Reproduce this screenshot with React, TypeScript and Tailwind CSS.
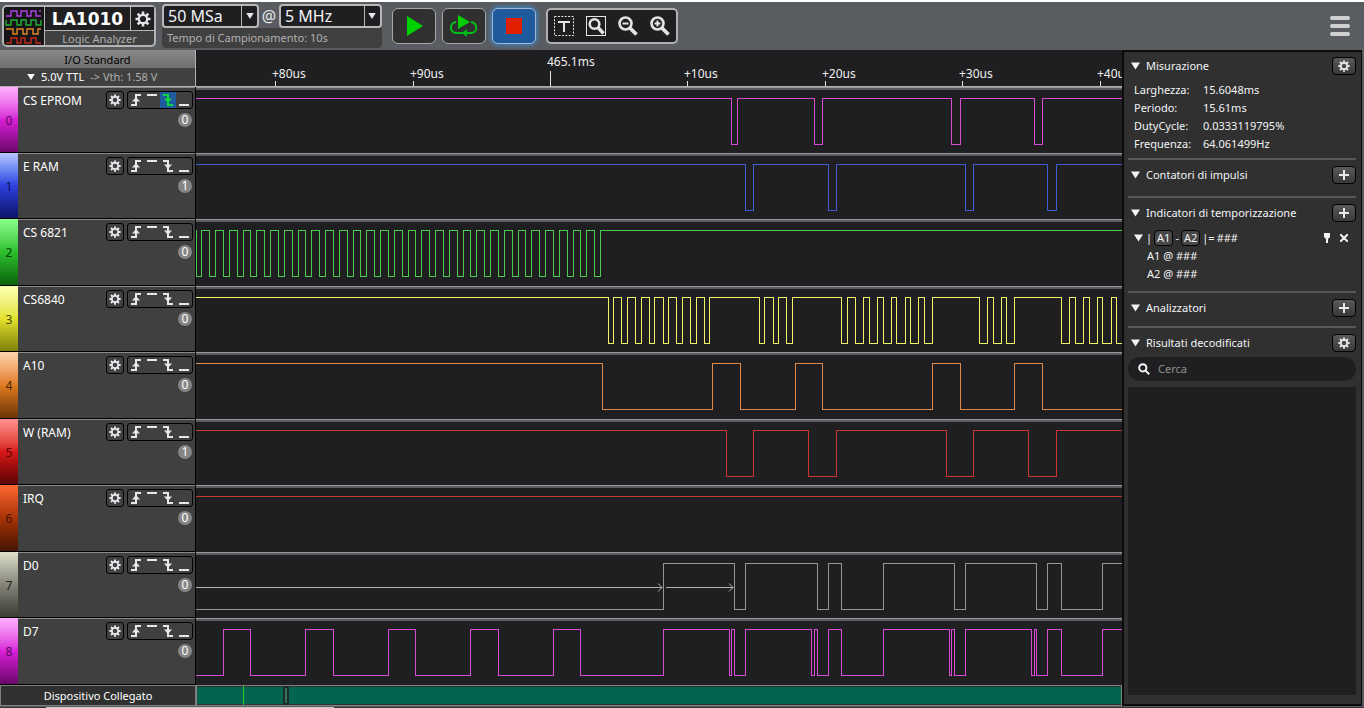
import React, { useState } from 'react';

type Edge = 'rising' | 'high' | 'falling' | 'low';

interface Channel {
  name: string;
  strip: string;
  digit: string;
  color: string;
  count: number;
  startHigh: boolean;
  edges: number[];
  trigger?: Edge;
  arrows?: [number, number][];
}

// A clock burst: low pulses of about 5.5 px, one every 13.75 px
const clockEdges = Array.from({ length: 30 }, (_, k) => {
  const rise = Math.round(5.3 + k * 13.75);
  return [Math.max(0, Math.round(rise - 5.6)), rise];
}).flat();

const CHANNELS: Channel[] = [
  {
    name: 'CS EPROM', count: 0, color: '#d84cd8', digit: 'text-[#5a0a5a]', startHigh: true, trigger: 'falling',
    strip: 'from-[#ffb0ff] via-[#d81fd8] to-[#6c086c]',
    edges: [535, 541, 618, 626, 755, 764, 838, 846],
  },
  {
    name: 'E RAM', count: 1, color: '#3f5cd4', digit: 'text-[#0a1050]', startHigh: true,
    strip: 'from-[#bcc6ff] via-[#2f40e0] to-[#0c1468]',
    edges: [549, 557, 632, 640, 769, 777, 851, 860],
  },
  {
    name: 'CS 6821', count: 0, color: '#4ccc4c', digit: 'text-[#074507]', startHigh: true,
    strip: 'from-[#8cff8c] via-[#2cc02c] to-[#0a640a]',
    edges: clockEdges,
  },
  {
    name: 'CS6840', count: 0, color: '#f2f266', digit: 'text-[#4c4c06]', startHigh: true,
    strip: 'from-[#ffffb0] via-[#e2e22c] to-[#808008]',
    edges: [
      412, 417, 425, 431, 439, 445, 453, 458, 467, 472, 480, 486, 494, 500, 508, 513,
      563, 568, 577, 582, 590, 596, 645, 651, 659, 667, 673, 681, 687, 695, 700, 709,
      714, 722, 728, 736, 783, 791, 797, 805, 810, 818, 865, 873, 879, 887, 893, 901,
      906, 915, 920, 928,
    ],
  },
  {
    name: 'A10', count: 0, color: '#e08c48', digit: 'text-[#4a2404]', startHigh: true,
    strip: 'from-[#ffd4ac] via-[#e07c20] to-[#6c3606]',
    edges: [406, 516, 544, 599, 626, 736, 764, 818, 846],
  },
  {
    name: 'W (RAM)', count: 1, color: '#cc3430', digit: 'text-[#600606]', startHigh: true,
    strip: 'from-[#ff9090] via-[#d81818] to-[#600404]',
    edges: [530, 557, 612, 640, 750, 777, 832, 860],
  },
  {
    name: 'IRQ', count: 0, color: '#bc3c30', digit: 'text-[#4a1402]', startHigh: true,
    strip: 'from-[#ff6830] via-[#a83406] to-[#461402]',
    edges: [],
  },
  {
    name: 'D0', count: 0, color: '#96968c', digit: 'text-[#202018]', startHigh: false,
    strip: 'from-[#e0e0cc] via-[#85857a] to-[#3c3c34]',
    edges: [467, 538, 549, 621, 632, 645, 687, 758, 769, 840, 851, 865, 906],
    arrows: [[0, 466], [470, 537]],
  },
  {
    name: 'D7', count: 0, color: '#d84cd8', digit: 'text-[#5a0a5a]', startHigh: false,
    strip: 'from-[#ffb0ff] via-[#d81fd8] to-[#6c086c]',
    edges: [
      27, 54, 109, 137, 192, 219, 274, 302, 357, 384, 467, 533, 535, 538, 549, 615, 618,
      621, 632, 645, 687, 753, 755, 758, 769, 835, 838, 840, 851, 865, 906,
    ],
  },
];

const TICKS = [
  { x: 79, label: '+80us' },
  { x: 217, label: '+90us' },
  { x: 354, label: '465.1ms', major: true },
  { x: 491, label: '+10us' },
  { x: 629, label: '+20us' },
  { x: 766, label: '+30us' },
  { x: 904, label: '+40us' },
];

const HIGH = 11;
const LOW = 57;

function tracePath(startHigh: boolean, edges: number[]) {
  let high = startHigh;
  let d = `M-1 ${high ? HIGH : LOW}`;
  edges.forEach((x) => {
    high = !high;
    d += `H${x}V${high ? HIGH : LOW}`;
  });
  return d + 'H4000';
}

function Gear({ className }: { className: string }) {
  return (
    <svg viewBox="0 0 16 16" className={className} fill="none" stroke="currentColor" aria-hidden="true">
      <circle cx="8" cy="8" r="4.2" strokeWidth="2.2" />
      <path
        strokeWidth="2.6"
        d="M8 .5v3M8 12.5v3M.5 8h3M12.5 8h3M2.7 2.7l2.1 2.1M11.2 11.2l2.1 2.1M13.3 2.7l-2.1 2.1M4.8 11.2l-2.1 2.1"
      />
    </svg>
  );
}

function Triangle({ className }: { className: string }) {
  return (
    <svg viewBox="0 0 10 8" className={className} fill="currentColor" aria-hidden="true">
      <path d="M0 0h10L5 8z" />
    </svg>
  );
}

const EDGE_PATHS: Record<Edge, { line: string; head?: string }> = {
  rising: { line: 'M3 13h5V3h5', head: 'M4 9.5L8 5l4 4.5z' },
  high: { line: 'M3 3h10' },
  falling: { line: 'M3 3h5v10h5', head: 'M4 6.5L8 11l4-4.5z' },
  low: { line: 'M3 13h10' },
};

function EdgeButton({ edge, active, onClick }: { edge: Edge; active: boolean; onClick: () => void }) {
  const { line, head } = EDGE_PATHS[edge];
  return (
    <button
      aria-label={edge}
      aria-pressed={active}
      onClick={onClick}
      className={`h-4 w-4 ${active ? 'bg-[#1c5c9c] text-[#10d838]' : 'text-gray-200'}`}
    >
      <svg viewBox="0 0 16 16" className="h-4 w-4" fill="none" stroke="currentColor" strokeWidth="2">
        <path d={line} />
        {head && <path d={head} fill="currentColor" stroke="none" />}
      </svg>
    </button>
  );
}

function ChannelRow({ channel, index }: { channel: Channel; index: number }) {
  const [trigger, setTrigger] = useState<Edge | undefined>(channel.trigger);
  const basis = index > 0 && index % 2 === 0 ? 'basis-[67px]' : 'basis-[66px]';

  return (
    <div className={`flex grow ${basis}`}>
      <div className="flex w-[196px] shrink-0 border-r border-b border-black bg-[#404040]">
        <div className={`flex w-[18px] items-center justify-center bg-linear-to-b pt-[2px] text-[12px] ${channel.strip} ${channel.digit}`}>
          {index}
        </div>
        <div className="flex flex-1 items-start justify-between border-t border-[#8a8a8a] pt-[3px] pr-[2px] pl-[5px]">
          <span className="text-[12px] leading-5 text-white">{channel.name}</span>
          <div className="flex flex-col items-end gap-1">
            <div className="flex gap-[3px]">
              <button
                aria-label={`Impostazioni ${channel.name}`}
                className="flex h-[18px] w-[18px] items-center justify-center rounded-[3px] border border-black text-gray-200"
              >
                <Gear className="h-3 w-3" />
              </button>
              <div className="flex rounded-[3px] border border-black">
                {(Object.keys(EDGE_PATHS) as Edge[]).map((edge) => (
                  <EdgeButton
                    key={edge}
                    edge={edge}
                    active={trigger === edge}
                    onClick={() => setTrigger(trigger === edge ? undefined : edge)}
                  />
                ))}
              </div>
            </div>
            <span className="mr-px flex h-[14px] w-[14px] items-center justify-center rounded-full bg-[#858585] text-[12px] leading-none text-white">
              {channel.count}
            </span>
          </div>
        </div>
      </div>
      <div className="relative min-w-0 flex-1 bg-[#1f1f22]">
        <div className="h-[3px] border-t border-[#98989c] bg-[#5c5c60]" />
        <svg className="absolute inset-0 h-full w-full" fill="none" stroke={channel.color} shapeRendering="crispEdges">
          <path d={tracePath(channel.startHigh, channel.edges)} transform="translate(.5 .5)" />
          {channel.arrows?.map(([from, to]) => (
            <path
              key={from}
              d={`M${from} 35.5H${to}M${to - 4} 31.5l4 4l-4 4`}
              stroke="#b4b4ac"
              shapeRendering="auto"
            />
          ))}
        </svg>
      </div>
    </div>
  );
}

function ValueSelect({ label, value, options, width }: { label: string; value: string; options: string[]; width: string }) {
  return (
    <div className={`relative flex h-6 rounded-[4px] border-2 border-[#b8b8b8] bg-[#1f1f22] ${width}`}>
      <select
        aria-label={label}
        defaultValue={value}
        className="w-full appearance-none bg-transparent pl-1 text-[16px] leading-5 text-gray-100 outline-none"
      >
        {options.map((option) => (
          <option key={option}>{option}</option>
        ))}
      </select>
      <div className="pointer-events-none absolute inset-y-0 right-0 flex w-4 items-center justify-center border-l border-[#b8b8b8] text-gray-200">
        <Triangle className="h-[6px] w-2" />
      </div>
    </div>
  );
}

function Toolbar() {
  return (
    <header className="flex h-12 items-start bg-[#595c60] pr-[14px] pl-[2px]">
      <div className="mt-[3px] flex h-[42px] w-[154px] rounded-[5px] border-2 border-[#b4b4b4] bg-[#404040]">
        <svg viewBox="0 0 40 38" className="h-[38px] w-10 rounded-l-[3px] bg-[#161618]" fill="none" strokeWidth="1.4">
          <path stroke="#b040e0" d="M2 9h5V4h6v5h4V4h6v5h4V4h5v5h5M35 4h2" />
          <path stroke="#20b030" d="M2 13v5h5v-5h6v5h4v-5h5v5h5v-5h5v5h5v-5" />
          <path stroke="#e08828" d="M2 22h7v5h4v-5h6v5h4v-5h6v5h5v-5h3" />
          <path stroke="#c82818" d="M2 36h5v-5h6v5h4v-5h4v5h6v-5h5v5h5" />
        </svg>
        <div className="flex flex-1 flex-col border-l border-[#b4b4b4]">
          <div className="flex h-6 border-b border-[#b4b4b4] bg-[#1f1f22]">
            <h1 className="flex-1 text-center font-['DejaVu_Sans',sans-serif] text-[17px] leading-6 font-bold text-white">LA1010</h1>
            <button aria-label="Impostazioni dispositivo" className="flex w-6 items-center justify-center border-l border-[#b4b4b4] text-gray-200">
              <Gear className="h-4 w-4" />
            </button>
          </div>
          <p className="text-center text-[11px] leading-4 text-[#b0b0b0]">Logic Analyzer</p>
        </div>
      </div>

      <div className="mt-[2px] ml-[6px] w-[220px] rounded-[4px] bg-[#404040]">
        <div className="flex items-center justify-between bg-[#595c60]">
          <ValueSelect label="Campioni" value="50 MSa" options={['10 MSa', '50 MSa', '100 MSa']} width="w-[97px]" />
          <span className="text-[16px] leading-6 text-gray-200">@</span>
          <ValueSelect label="Frequenza" value="5 MHz" options={['1 MHz', '5 MHz', '10 MHz']} width="w-[103px]" />
        </div>
        <p className="pl-[5px] text-[11px] leading-5 text-[#b0b0b0]">Tempo di Campionamento: 10s</p>
      </div>

      <div className="mt-[6px] ml-[10px] flex gap-[6px]">
        <button aria-label="Avvia" className="flex h-9 w-11 items-center justify-center rounded-[6px] border border-[#a8a8a8] bg-[#303030]">
          <svg viewBox="0 0 18 20" className="h-5 w-[18px]" fill="#00d000">
            <path d="M2 0l16 10L2 20z" />
          </svg>
        </button>
        <button aria-label="Avvia in ciclo" className="flex h-9 w-11 items-center justify-center rounded-[6px] border border-[#a8a8a8] bg-[#303030]">
          <svg viewBox="0 0 28 24" className="h-6 w-7" fill="none" stroke="#00c018" strokeWidth="2">
            <path d="M8 1l12 7L8 15z" fill="#00d000" stroke="none" />
            <path d="M6 8C-1 9-1 19 7 19h14c7 0 7-10 0-11" />
            <path d="M17 15l-5 4 5 4z" fill="#00c018" stroke="none" />
          </svg>
        </button>
        <button
          aria-label="Ferma"
          className="flex h-9 w-11 items-center justify-center rounded-[6px] border border-[#a0b8d0] bg-[#1f5a9c] shadow-[0_0_5px_1px_#3c88c8]"
        >
          <span className="h-4 w-4 bg-[#e02000]" />
        </button>
      </div>

      <div className="mt-[6px] ml-[10px] flex h-9 w-[132px] items-center justify-around rounded-[5px] border-2 border-[#b0b0b0] bg-[#1f1f22] text-[#e4e4e4]">
        <button aria-label="Testo">
          <svg viewBox="0 0 20 20" className="h-5 w-5" fill="none" stroke="currentColor">
            <rect x=".5" y=".5" width="19" height="19" strokeDasharray="2 1.4" />
            <path d="M4 6h12M10 6v10" strokeWidth="2" />
          </svg>
        </button>
        <button aria-label="Zoom selezione">
          <svg viewBox="0 0 20 20" className="h-5 w-5" fill="none" stroke="currentColor">
            <rect x=".5" y=".5" width="19" height="19" />
            <circle cx="8.5" cy="8" r="4.8" strokeWidth="2.6" />
            <path d="M12 11.5l5.5 6" strokeWidth="3.4" />
          </svg>
        </button>
        <button aria-label="Riduci">
          <svg viewBox="0 0 20 20" className="h-5 w-5" fill="none" stroke="currentColor">
            <circle cx="7.5" cy="7.5" r="6" strokeWidth="2.6" />
            <path d="M4.5 7.5h6" strokeWidth="2" />
            <path d="M12 12l6.5 6.5" strokeWidth="3.8" />
          </svg>
        </button>
        <button aria-label="Ingrandisci">
          <svg viewBox="0 0 20 20" className="h-5 w-5" fill="none" stroke="currentColor">
            <circle cx="7.5" cy="7.5" r="6" strokeWidth="2.6" />
            <path d="M4.5 7.5h6M7.5 4.5v6" strokeWidth="2" />
            <path d="M12 12l6.5 6.5" strokeWidth="3.8" />
          </svg>
        </button>
      </div>

      <button aria-label="Menu" className="mt-[14px] ml-auto flex w-5 flex-col gap-1">
        <span className="h-1 w-full rounded-full bg-[#d0d0d0]" />
        <span className="h-1 w-full rounded-full bg-[#d0d0d0]" />
        <span className="h-1 w-full rounded-full bg-[#d0d0d0]" />
      </button>
    </header>
  );
}

function Ruler() {
  return (
    <svg className="h-9 min-w-0 flex-1 bg-[#1f1f22]" aria-label="Scala temporale">
      {TICKS.map(({ x, label, major }) => (
        <g key={label}>
          <rect x={x} y={major ? 21 : 31} width="1" height={major ? 15 : 5} fill="#e4e4e4" />
          <text x={x - 3} y={major ? 16 : 28} fill="#f0f0f0" fontSize="12">
            {label}
          </text>
        </g>
      ))}
    </svg>
  );
}

function SectionHeader({ title, action }: { title: string; action: 'gear' | 'add' }) {
  return (
    <div className="flex items-center gap-[6px] pl-[3px]">
      <Triangle className="h-2 w-[9px] text-gray-100" />
      <h2 className="flex-1 pt-px text-[11px] leading-[18px] text-gray-100">{title}</h2>
      <button
        aria-label={action === 'gear' ? `Impostazioni ${title}` : `Aggiungi ${title}`}
        className="flex h-[18px] w-6 items-center justify-center rounded-[4px] border border-black bg-linear-to-b from-[#5a5a5a] to-[#383838] text-gray-200"
      >
        {action === 'gear' ? (
          <Gear className="h-3 w-3" />
        ) : (
          <svg viewBox="0 0 10 10" className="h-[10px] w-[10px]" stroke="currentColor" strokeWidth="2">
            <path d="M0 5h10M5 0v10" />
          </svg>
        )}
      </button>
    </div>
  );
}

const MEASURES = [
  ['Larghezza:', '15.6048ms'],
  ['Periodo:', '15.61ms'],
  ['DutyCycle:', '0.0333119795%'],
  ['Frequenza:', '64.061499Hz'],
];

function Divider() {
  return <hr className="border-t-2 border-[#585858]" />;
}

function Sidebar() {
  return (
    <aside className="mr-[2px] flex w-[240px] shrink-0 flex-col border-2 border-r border-[#0c0c0c] bg-[#303030] pt-1 pr-[5px] pb-[9px] pl-1 text-[11px] text-gray-100">
      <SectionHeader title="Misurazione" action="gear" />
      <dl className="mt-[6px] mb-[5px] grid grid-cols-[69px_1fr] pl-[6px] leading-[18px]">
        {MEASURES.map(([label, value]) => (
          <React.Fragment key={label}>
            <dt>{label}</dt>
            <dd>{value}</dd>
          </React.Fragment>
        ))}
      </dl>
      <Divider />
      <div className="pt-[5px] pb-3">
        <SectionHeader title="Contatori di impulsi" action="add" />
      </div>
      <Divider />
      <div className="pt-[5px] pb-2">
        <SectionHeader title="Indicatori di temporizzazione" action="add" />
        <div className="mt-[7px] flex items-center gap-[2px] pl-[6px] leading-[18px]">
          <Triangle className="mr-[1px] h-2 w-[9px]" />
          <span>|</span>
          <button className="rounded-[4px] border border-black bg-[#484848] px-[2px] leading-[14px]">A1</button>
          <span>-</span>
          <button className="rounded-[4px] border border-black bg-[#484848] px-[2px] leading-[14px]">A2</button>
          <span>|=</span>
          <span>###</span>
          <div className="ml-auto flex items-center gap-[9px] pr-2">
            <button aria-label="Fissa">
              <svg viewBox="0 0 8 10" className="h-[10px] w-2" fill="currentColor">
                <path d="M1 0h6v4L5 6v4H3V6L1 4z" />
              </svg>
            </button>
            <button aria-label="Rimuovi">
              <svg viewBox="0 0 8 8" className="h-2 w-2" stroke="currentColor" strokeWidth="2">
                <path d="M0 0l8 8M8 0L0 8" />
              </svg>
            </button>
          </div>
        </div>
        <p className="pl-[19px] leading-[18px]">A1 @ ###</p>
        <p className="pl-[19px] leading-[18px]">A2 @ ###</p>
      </div>
      <Divider />
      <div className="pt-[5px] pb-[9px]">
        <SectionHeader title="Analizzatori" action="add" />
      </div>
      <Divider />
      <div className="pt-[5px]">
        <SectionHeader title="Risultati decodificati" action="gear" />
      </div>
      <label className="mt-[5px] flex h-6 shrink-0 items-center gap-2 rounded-full bg-[#1f1f22] px-[10px]">
        <svg viewBox="0 0 12 12" className="h-3 w-3 shrink-0" fill="none" stroke="currentColor" strokeWidth="2">
          <circle cx="4.8" cy="4.8" r="3.6" />
          <path d="M7.4 7.4l3.8 3.8" />
        </svg>
        <input
          aria-label="Cerca"
          placeholder="Cerca"
          className="w-full min-w-0 bg-transparent leading-5 outline-none placeholder:text-[#909090]"
        />
      </label>
      <div className="mt-[6px] flex-1 bg-[#1f1f22]" />
    </aside>
  );
}

export default function App() {
  return (
    <div className="flex min-h-screen flex-col bg-[#595c60] pt-[2px] font-['Noto_Sans',sans-serif] text-[12px] shadow-[inset_0_2px_0_#ffffff]">
      <Toolbar />
      <div className="flex flex-1">
        <main className="flex min-w-0 flex-1 flex-col">
          <div className="flex border-b border-[#b0b0b0]">
            <div className="w-[196px] shrink-0 border-r border-[#b0b0b0] bg-[#404040] text-[11px]">
              <p className="bg-linear-to-b from-[#888888] to-[#707070] pt-[2px] text-center leading-4 text-black">I/O Standard</p>
              <button className="flex h-[18px] w-full items-center gap-[6px] pl-[27px] leading-[18px] text-white">
                <Triangle className="h-[6px] w-2" />
                <span>5.0V TTL</span>
                <span className="text-[#b0b0b0]">-&gt; Vth: 1.58 V</span>
              </button>
            </div>
            <Ruler />
          </div>

          <div className="flex flex-1 flex-col">
            {CHANNELS.map((channel, i) => (
              <ChannelRow key={channel.name} channel={channel} index={i} />
            ))}
          </div>

          <footer className="flex h-[21px] bg-[#303030]">
            <p className="w-[196px] shrink-0 border border-[#808080] text-center text-[11px] leading-5 text-white">Dispositivo Collegato</p>
            <div className="relative min-w-0 flex-1 border border-[#808080] bg-[#303030] py-px">
              <div className="h-full bg-[#04644f]" />
              <div className="absolute inset-y-0 left-[46px] w-px bg-[#20d020]" />
              <div className="absolute inset-y-0 left-[86px] w-[6px] rounded-[2px] border-2 border-[#182c28] bg-[#3c6c60]" />
            </div>
          </footer>
        </main>
        <Sidebar />
      </div>
      <div className="flex h-[2px] border-t border-[#595c60] bg-[#30343a]">
        <div className="ml-[46px] w-[288px] bg-[#c8c8c8]" />
      </div>
    </div>
  );
}
